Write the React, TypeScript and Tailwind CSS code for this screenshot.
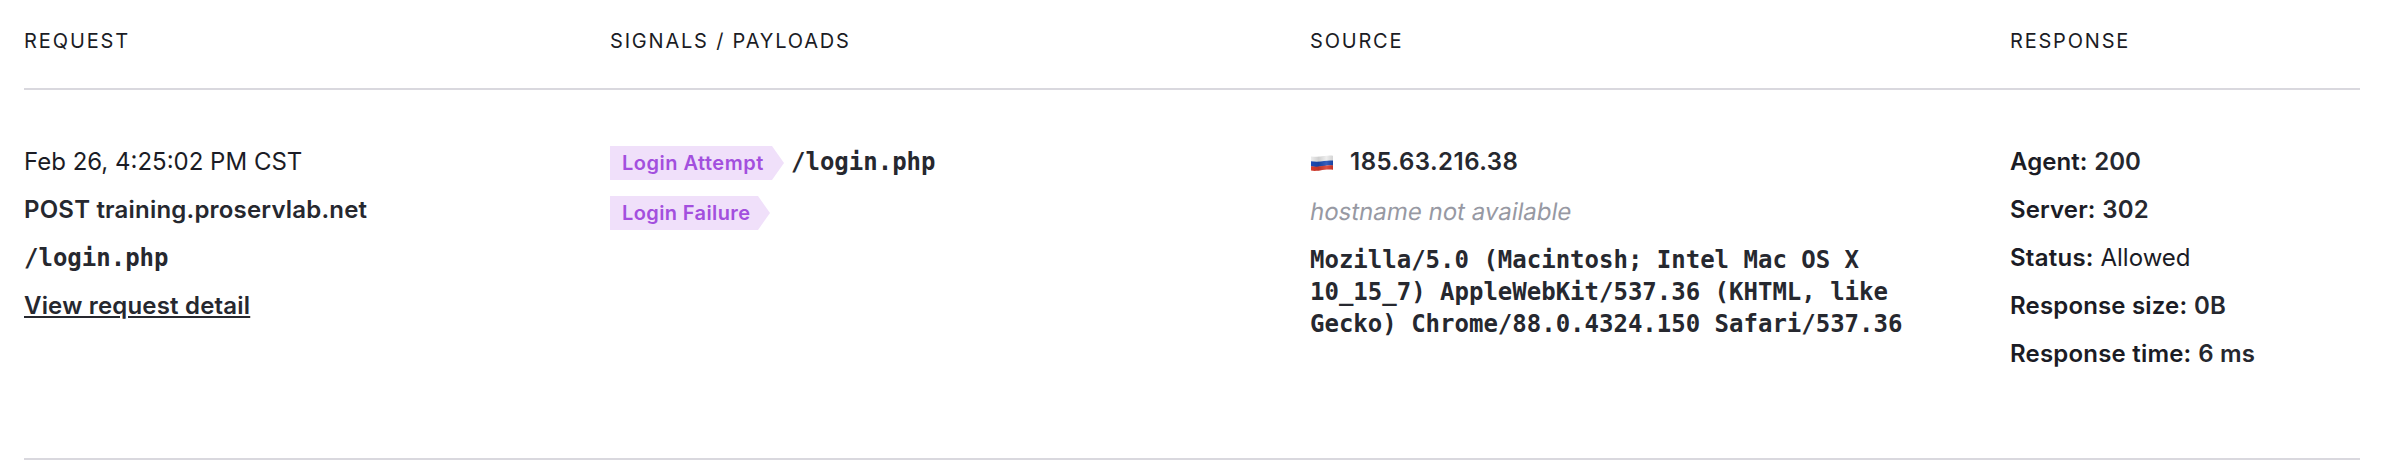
import type { ReactNode } from "react";

const GRID = "grid grid-cols-[586px_700px_700px_350px]";
const MONO = "font-['DejaVu_Sans_Mono',monospace] font-bold text-[#26282f] leading-8";

function Signal({ className, children }: { className: string; children: ReactNode }) {
  return (
    <span
      className={`block h-[34px] shrink-0 whitespace-nowrap bg-[#f0e0fa] pl-3 text-[20px] leading-[34px] font-semibold text-[#a34fde] [clip-path:polygon(0_0,calc(100%-12px)_0,100%_50%,calc(100%-12px)_100%,0_100%)] ${className}`}
    >
      {children}
    </span>
  );
}

function Flag() {
  return (
    <svg className="h-[16px] w-[22px] shrink-0" viewBox="0 0 22 16" aria-hidden="true">
      <defs>
        <linearGradient id="shade" x1="0" x2="1" y1="0" y2="0">
          <stop offset="0" stopColor="#000" stopOpacity="0" />
          <stop offset="0.35" stopColor="#000" stopOpacity="0.12" />
          <stop offset="0.7" stopColor="#fff" stopOpacity="0.12" />
          <stop offset="1" stopColor="#000" stopOpacity="0.1" />
        </linearGradient>
      </defs>
      <path d="M0 1.500C5 2.200 9 1.800 13 1.100S20 .4 22 .8V6C17 5.500 13 6.500 9 6.900S3 7 0 6.600Z" fill="#ececec" />
      <path d="M0 6.200C5 7 9 6.700 13 6S20 5.300 22 5.600V10.700C17 10.200 13 11.200 9 11.700S3 12 0 11.600Z" fill="#1b4bb5" />
      <path d="M0 11.200C5 12 9 11.600 13 10.800S20 10.100 22 10.400V14.800C17 14.200 13 15 9 15.500S3 16 0 15.600Z" fill="#d93a2b" />
      <path d="M0 1.500C5 2.200 9 1.800 13 1.100S20 .4 22 .8V14.800C17 14.200 13 15 9 15.500S3 16 0 15.600Z" fill="url(#shade)" />
    </svg>
  );
}

const response = [
  { label: "Agent:", value: "200", strong: true, tracking: "tracking-[0.05px]" },
  { label: "Server:", value: "302", strong: true, tracking: "tracking-[0.12px]" },
  { label: "Status:", value: "Allowed", strong: false, tracking: "tracking-[0.25px]" },
  { label: "Response size:", value: "0B", strong: true, tracking: "tracking-[0.17px]" },
  { label: "Response time:", value: "6 ms", strong: true, tracking: "tracking-[0.2px]" },
];

export default function App() {
  return (
    <div className="h-[474px] bg-white pr-[34px] pl-6 font-['Inter',sans-serif] text-[24px] leading-[31px] text-[#1b1c25]">
      <div className={`${GRID} h-[90px] border-b-2 border-[#d9d8de] pt-[25px] text-[20px] leading-8 tracking-[1.8px]`}>
        <div className="tracking-[1.9px]">REQUEST</div>
        <div>SIGNALS / PAYLOADS</div>
        <div>SOURCE</div>
        <div>RESPONSE</div>
      </div>
      <div className={`${GRID} h-[370px] border-b-2 border-[#d9d8de] pt-14`}>
        <div className="flex flex-col items-start gap-4">
          <div className="h-8">Feb 26, 4:25:02 PM CST</div>
          <div className="h-8 font-semibold tracking-[0.2px] text-[#26282f]">POST training.proservlab.net</div>
          <div className={MONO}>/login.php</div>
          <a href="#" className="h-8 font-semibold tracking-[0.19px] text-[#26282f] underline">
            View request detail
          </a>
        </div>
        <div className="flex flex-col items-start gap-4">
          <div className="flex h-[34px] items-start gap-[7px]">
            <Signal className="w-[174px] tracking-[0.5px]">Login Attempt</Signal>
            <span className={MONO}>/login.php</span>
          </div>
          <Signal className="w-[160px] tracking-[0.39px]">Login Failure</Signal>
        </div>
        <div className="flex flex-col gap-4">
          <div className="flex h-[34px] items-start gap-[17px] pl-px">
            <div className="flex h-[34px] items-center">
              <Flag />
            </div>
            <span className="font-semibold tracking-[0.48px] text-[#26282f]">185.63.216.38</span>
          </div>
          <div className="h-8 w-[280px] origin-[0_18px] -skew-x-[9.4deg] text-[#9799a3]">hostname not available</div>
          <div className={`${MONO} w-[620px]`}>
            Mozilla/5.0 (Macintosh; Intel Mac OS X 10_15_7) AppleWebKit/537.36 (KHTML, like Gecko)
            Chrome/88.0.4324.150 Safari/537.36
          </div>
        </div>
        <div className="flex flex-col gap-4">
          {response.map((r) => (
            <div key={r.label} className="h-8">
              <span className={`font-semibold ${r.tracking}`}>{r.label}</span>{" "}
              <span className={r.strong ? `font-semibold text-[#26282f] ${r.tracking}` : ""}>{r.value}</span>
            </div>
          ))}
        </div>
      </div>
    </div>
  );
}
